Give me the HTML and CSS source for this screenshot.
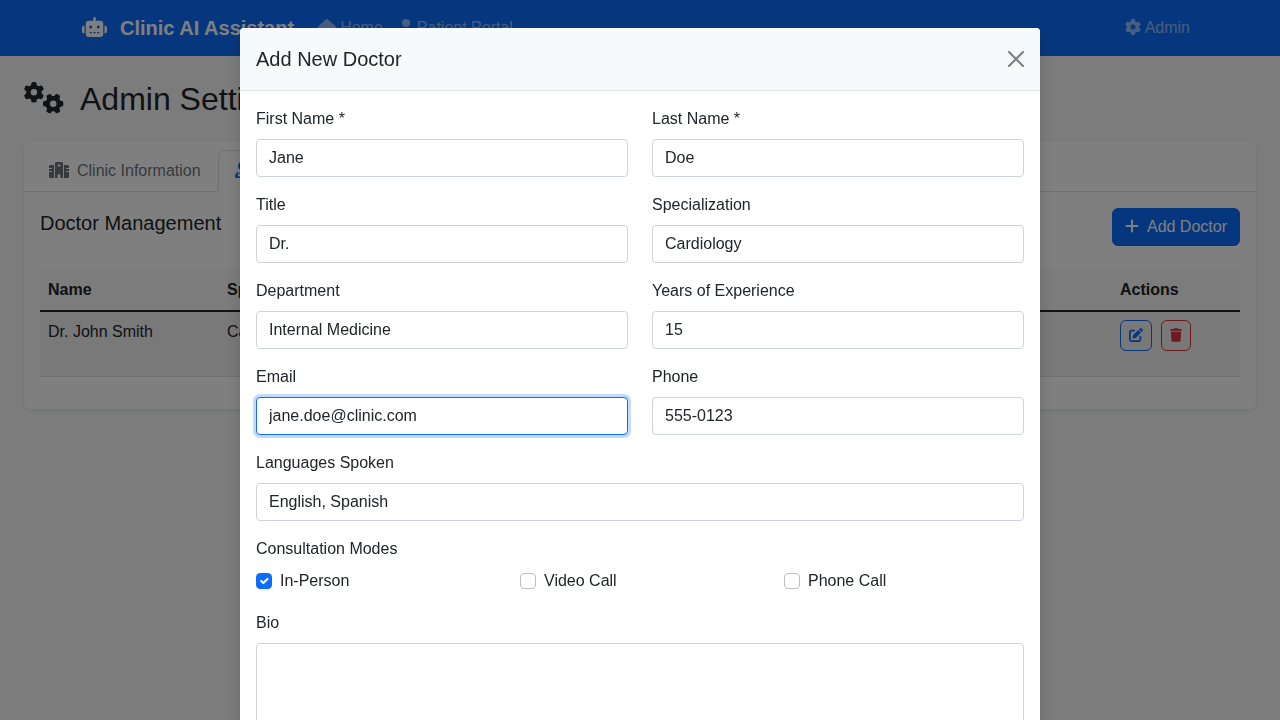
FILE: index.html
```html
<!DOCTYPE html>
<html lang="en">
<head>
<meta charset="utf-8">
<meta name="viewport" content="width=device-width, initial-scale=1">
<title>Admin Settings - Clinic AI Assistant</title>
<link rel="stylesheet" href="styles.css">
</head>
<body>
<svg class="sprite" aria-hidden="true">
  <symbol id="gear" viewBox="0 0 512 512"><path d="M495.9 166.6c3.2 8.7 .5 18.4-6.4 24.6l-43.3 39.4c1.1 8.3 1.7 16.8 1.7 25.4s-.6 17.1-1.7 25.4l43.3 39.4c6.9 6.2 9.6 15.9 6.4 24.6c-4.4 11.9-9.7 23.3-15.8 34.3l-4.7 8.1c-6.6 11-14 21.4-22.1 31.2c-5.9 7.2-15.7 9.6-24.5 6.8l-55.7-17.7c-13.4 10.3-28.2 18.9-44 25.4l-12.5 57.1c-2 9.1-9 16.3-18.2 17.8c-13.8 2.3-28 3.5-42.5 3.5s-28.7-1.2-42.5-3.5c-9.2-1.5-16.2-8.7-18.2-17.8l-12.5-57.1c-15.8-6.5-30.6-15.1-44-25.4L83.1 425.9c-8.8 2.8-18.6 .3-24.5-6.8c-8.1-9.8-15.5-20.2-22.1-31.2l-4.7-8.1c-6.1-11-11.4-22.4-15.8-34.3c-3.2-8.7-.5-18.4 6.4-24.6l43.3-39.4C64.6 273.1 64 264.6 64 256s.6-17.1 1.7-25.4L22.4 191.2c-6.9-6.2-9.6-15.9-6.4-24.6c4.4-11.9 9.7-23.3 15.8-34.3l4.7-8.1c6.6-11 14-21.4 22.1-31.2c5.9-7.2 15.7-9.6 24.5-6.8l55.7 17.7c13.4-10.3 28.2-18.9 44-25.4l12.5-57.1c2-9.1 9-16.3 18.2-17.8C227.3 1.2 241.5 0 256 0s28.7 1.2 42.5 3.5c9.2 1.5 16.2 8.7 18.2 17.8l12.5 57.1c15.8 6.5 30.6 15.1 44 25.4l55.7-17.7c8.8-2.8 18.6-.3 24.5 6.8c8.1 9.8 15.5 20.2 22.1 31.2l4.7 8.1c6.1 11 11.4 22.4 15.8 34.3zM256 336a80 80 0 1 0 0-160 80 80 0 1 0 0 160z"/></symbol>
</svg>

<nav class="navbar">
  <div class="navbar-inner">
    <a class="brand" href="#">
      <svg class="icon icon-brand" viewBox="0 0 640 512"><path d="M320 0c17.7 0 32 14.3 32 32V96H472c39.8 0 72 32.2 72 72V440c0 39.8-32.2 72-72 72H168c-39.8 0-72-32.2-72-72V168c0-39.8 32.2-72 72-72H288V32c0-17.7 14.3-32 32-32zM208 384c-8.8 0-16 7.2-16 16s7.2 16 16 16h32c8.8 0 16-7.2 16-16s-7.2-16-16-16H208zm96 0c-8.8 0-16 7.2-16 16s7.2 16 16 16h32c8.8 0 16-7.2 16-16s-7.2-16-16-16H304zm96 0c-8.8 0-16 7.2-16 16s7.2 16 16 16h32c8.8 0 16-7.2 16-16s-7.2-16-16-16H400zM264 256a40 40 0 1 0 -80 0 40 40 0 1 0 80 0zm152 40a40 40 0 1 0 0-80 40 40 0 1 0 0 80zM48 224H64V416H48c-26.5 0-48-21.5-48-48V272c0-26.5 21.5-48 48-48zm544 0c26.5 0 48 21.5 48 48v96c0 26.5-21.5 48-48 48H576V224h16z"/></svg>
      Clinic AI Assistant
    </a>
    <div class="nav-links">
      <a class="nav-link" href="#"><svg class="icon icon-home" viewBox="0 0 576 512"><path d="M575.8 255.5c0 18-15 32.1-32 32.1h-32l.7 160.2c0 35-28 64-64 64H128c-35 0-64-29-64-64V287.6H32c-18 0-32-14-32-32.1c0-9 3-17 10-24L266.4 8c7-7 15-8 22-8s15 2 21 7L564.8 231.5c8 7 12 15 11 24z"/></svg>Home</a>
      <a class="nav-link" href="#"><svg class="icon icon-user" viewBox="0 0 448 512"><path d="M224 256A128 128 0 1 0 224 0a128 128 0 1 0 0 256zm-45.700 48C79.800 304 0 383.800 0 482.300C0 498.700 13.300 512 29.700 512H418.300c16.400 0 29.700-13.300 29.700-29.700C448 383.800 368.200 304 269.700 304H178.300z"/></svg>Patient Portal</a>
    </div>
    <a class="nav-link" href="#"><svg class="icon"><use href="#gear"/></svg>Admin</a>
  </div>
</nav>

<main class="page">
  <h1 class="page-title">
    <svg class="icon icon-title" viewBox="0 0 640 512"><use href="#gear" x="-6" y="0" width="330" height="330"/><use href="#gear" x="303" y="182" width="330" height="330" transform="rotate(90 468 347)"/></svg>
    Admin Settings
  </h1>

  <section class="card">
    <div class="card-header">
      <div class="tabs" role="tablist">
        <button class="tab" type="button" role="tab"><svg class="icon icon-wide" viewBox="0 0 640 512"><path fill-rule="evenodd" d="M240 0H400c26 0 48 22 48 48V512H368V432a48 48 0 0 0-96 0v80H192V48c0-26 22-48 48-48zM304 64v32h-32v32h32v32h32v-32h32V96h-32V64zM48 96H160V512H48c-26 0-48-22-48-48V320H80c21 0 21-32 0-32H0V224H80c21 0 21-32 0-32H0V144c0-26 22-48 48-48zM480 96H592c26 0 48 22 48 48v48H560c-21 0-21 32 0 32h80v64H560c-21 0-21 32 0 32h80V464c0 26-22 48-48 48H480z"/></svg>Clinic Information</button>
        <button class="tab tab-active" type="button" role="tab" aria-selected="true"><svg class="icon icon-user" viewBox="0 0 448 512"><path fill-rule="evenodd" d="M224 256A128 128 0 1 0 224 0a128 128 0 1 0 0 256zM96 311C40 336 0 400 0 482c0 17 13 30 30 30H418c17 0 30-13 30-30c0-82-40-146-96-171v58a56 56 0 0 1 32 50v45h-48v-32h16v-13a24 24 0 0 0-48 0v13h16v32h-48v-45a56 56 0 0 1 32-50v-65h-16l-64 120-64-120h-16v82a40 40 0 1 1-32 0z"/></svg>Doctors</button>
      </div>
    </div>
    <div class="card-body">
      <div class="toolbar">
        <h2 class="section-title">Doctor Management</h2>
        <button class="btn btn-primary" type="button"><svg class="icon icon-user" viewBox="0 0 448 512"><path d="M256 80c0-17.700-14.300-32-32-32s-32 14.300-32 32V224H48c-17.700 0-32 14.300-32 32s14.300 32 32 32H192V432c0 17.700 14.300 32 32 32s32-14.300 32-32V288H400c17.700 0 32-14.300 32-32s-14.300-32-32-32H256V80z"/></svg>Add Doctor</button>
      </div>
      <table class="table">
        <thead>
          <tr><th class="col-name">Name</th><th>Specialization</th><th class="col-actions">Actions</th></tr>
        </thead>
        <tbody>
          <tr>
            <td>Dr. John Smith</td>
            <td>Cardiology</td>
            <td>
              <div class="actions">
                <button class="btn-sm btn-edit" type="button" aria-label="Edit"><svg class="icon-sm" viewBox="0 0 512 512"><path d="M471.6 21.7c-21.9-21.9-57.3-21.9-79.2 0L362.3 51.700l97.900 97.900 30.100-30.100c21.900-21.900 21.900-57.300 0-79.200L471.600 21.700zm-299.200 220c-6.100 6.100-10.800 13.600-13.500 21.900l-29.600 88.800c-2.900 8.600-.6 18.100 5.800 24.600s15.900 8.700 24.600 5.800l88.800-29.600c8.200-2.700 15.700-7.400 21.900-13.500L437.700 172.300 339.700 74.300 172.400 241.700zM96 64C43 64 0 107 0 160V416c0 53 43 96 96 96H352c53 0 96-43 96-96V320c0-17.700-14.300-32-32-32s-32 14.300-32 32v96c0 17.700-14.300 32-32 32H96c-17.700 0-32-14.300-32-32V160c0-17.700 14.300-32 32-32h96c17.700 0 32-14.300 32-32s-14.300-32-32-32H96z"/></svg></button>
                <button class="btn-sm btn-delete" type="button" aria-label="Delete"><svg class="icon-sm icon-trash" viewBox="0 0 448 512"><path d="M135.200 17.700L128 32H32C14.300 32 0 46.300 0 64S14.300 96 32 96H416c17.700 0 32-14.300 32-32s-14.300-32-32-32H320l-7.200-14.300C307.400 6.800 296.300 0 284.200 0H163.800c-12.100 0-23.200 6.800-28.600 17.700zM416 128H32L53.200 467c1.600 25.300 22.600 45 47.900 45H346.900c25.300 0 46.300-19.700 47.900-45L416 128z"/></svg></button>
              </div>
            </td>
          </tr>
        </tbody>
      </table>
    </div>
  </section>
</main>

<div class="overlay">
  <form class="modal" role="dialog" aria-modal="true" aria-labelledby="modal-title">
    <header class="modal-header">
      <h2 class="section-title" id="modal-title">Add New Doctor</h2>
      <button class="close" type="button" aria-label="Close"><svg class="icon-close" viewBox="0 0 16 16"><path d="M1 1l14 14M15 1L1 15" stroke="currentColor" stroke-width="2" stroke-linecap="round"/></svg></button>
    </header>
    <div class="modal-body">
      <div class="form-grid">
        <div class="field"><label for="first">First Name *</label><input class="control" id="first" type="text" value="Jane"></div>
        <div class="field"><label for="last">Last Name *</label><input class="control" id="last" type="text" value="Doe"></div>
        <div class="field"><label for="title">Title</label><input class="control" id="title" type="text" value="Dr."></div>
        <div class="field"><label for="spec">Specialization</label><input class="control" id="spec" type="text" value="Cardiology"></div>
        <div class="field"><label for="dept">Department</label><input class="control" id="dept" type="text" value="Internal Medicine"></div>
        <div class="field"><label for="years">Years of Experience</label><input class="control" id="years" type="text" inputmode="numeric" value="15"></div>
        <div class="field"><label for="email">Email</label><input class="control control-current" id="email" type="email" value="jane.doe@clinic.com"></div>
        <div class="field"><label for="phone">Phone</label><input class="control" id="phone" type="tel" value="555-0123"></div>
      </div>
      <div class="field"><label for="langs">Languages Spoken</label><input class="control" id="langs" type="text" value="English, Spanish"></div>
      <fieldset class="modes">
        <legend>Consultation Modes</legend>
        <div class="mode-grid">
          <label class="check"><input type="checkbox" checked>In-Person</label>
          <label class="check"><input type="checkbox">Video Call</label>
          <label class="check"><input type="checkbox">Phone Call</label>
        </div>
      </fieldset>
      <div class="field"><label for="bio">Bio</label><textarea class="control" id="bio" rows="3"></textarea></div>
    </div>
  </form>
</div>
</body>
</html>
```
FILE: styles.css
```css
*, *::before, *::after { box-sizing: border-box; }

body {
  margin: 0;
  overflow: hidden;
  background: #f8f9fa;
  color: #212529;
  font-family: "Liberation Sans", Arial, sans-serif;
  font-size: 16px;
  line-height: 24px;
}

h1, h2 { margin: 0; font-weight: 400; }
button, input, textarea { font: inherit; color: inherit; }
button { cursor: pointer; }
a { color: inherit; text-decoration: none; }

.sprite { display: none; }
.icon, .icon-sm, .icon-close { flex: none; fill: currentColor; }
.icon { width: 16px; height: 16px; margin-bottom: 2px; }
.icon-user { width: 14px; }
.icon-home { width: 18px; }
.icon-wide { width: 20px; }
.icon-brand { width: 25px; height: 20px; }
.icon-title { width: 40px; height: 32px; }
.icon-sm { width: 14px; height: 14px; }
.icon-trash { width: 12px; }
.icon-close { width: 16px; height: 16px; }

.navbar { background: #0d6efd; color: #fff; }
.navbar-inner {
  display: flex;
  align-items: center;
  max-width: 1140px;
  min-height: 56px;
  margin: 0 auto;
  padding: 8px 12px;
}
.brand {
  display: flex;
  align-items: center;
  gap: 13px;
  margin-right: 16px;
  font-size: 20px;
  font-weight: 700;
}
.nav-links { display: flex; margin-right: auto; }
.nav-link {
  display: flex;
  align-items: center;
  gap: 4px;
  padding: 8px;
  color: rgba(255, 255, 255, 0.55);
}

.page { padding: 24px; }
.page-title {
  display: flex;
  align-items: center;
  gap: 16px;
  margin-bottom: 24px;
  font-size: 32px;
  line-height: 38px;
}

.card {
  border-radius: 6px;
  background: #fff;
  box-shadow: 0 2px 4px rgba(0, 0, 0, 0.08);
}
.card-header { padding: 8px 8px 0; border-bottom: 1px solid #dee2e6; }
.tabs { display: flex; margin-bottom: -1px; }
.tab {
  display: flex;
  align-items: center;
  gap: 8px;
  padding: 8px 16px;
  border: 1px solid transparent;
  border-radius: 6px 6px 0 0;
  background: none;
  color: #6c757d;
}
.tab-active { border-color: #dee2e6 #dee2e6 #fff; background: #fff; color: #0d6efd; }

.card-body { padding: 16px 16px 32px; }
.toolbar {
  display: flex;
  align-items: flex-start;
  justify-content: space-between;
  margin-bottom: 24px;
}
.section-title { font-size: 20px; line-height: 30px; }
.btn {
  display: flex;
  align-items: center;
  gap: 8px;
  padding: 6px 12px;
  border: 1px solid #0d6efd;
  border-radius: 6px;
}
.btn-primary { background: #0d6efd; color: #fff; }

.table { width: 100%; border-collapse: separate; border-spacing: 0; table-layout: fixed; }
.table th, .table td { padding: 8px; text-align: left; vertical-align: top; }
.table th { border-bottom: 2px solid #212529; background: #f8f9fa; }
.table td { height: 65px; border-bottom: 1px solid #dee2e6; background: #f2f2f2; }
.col-name { width: 179px; }
.col-actions { width: 128px; }
.actions { display: flex; gap: 9px; }
.btn-sm {
  display: flex;
  align-items: center;
  padding: 7px 8px 8px;
  border: 1px solid currentColor;
  border-radius: 6px;
  background: none;
}
.btn-edit { color: #0d6efd; }
.btn-delete { color: #dc3545; }

.overlay {
  position: fixed;
  inset: 0;
  overflow-y: auto;
  scrollbar-width: none;
  background: rgba(0, 0, 0, 0.5);
}
.modal {
  width: min(800px, 100% - 16px);
  margin: 28px auto;
  border-radius: 4px;
  background: #fff;
  box-shadow: 0 8px 16px rgba(0, 0, 0, 0.15);
}
.modal-header {
  display: flex;
  align-items: center;
  justify-content: space-between;
  padding: 16px;
  border-bottom: 1px solid #dee2e6;
  border-radius: 4px 4px 0 0;
  background: #f8f9fa;
}
.close {
  display: flex;
  padding: 0;
  border: 0;
  background: none;
  color: #7c7d7d;
}
.modal-body { padding: 16px; }
.form-grid { display: grid; grid-template-columns: 1fr 1fr; column-gap: 24px; }
.field { margin-bottom: 16px; }
.field label { display: block; margin-bottom: 8px; }
.control {
  display: block;
  width: 100%;
  padding: 6px 12px;
  border: 1px solid #ced4da;
  border-radius: 4px;
  outline: 0;
  background: #fff;
}
.control-current, .control:focus {
  border-color: #0d6efd;
  box-shadow: 0 0 0 3px rgba(13, 110, 253, 0.25);
}
textarea.control { min-height: 86px; resize: vertical; }

.modes { margin: 0 0 16px; padding: 0; border: 0; }
.modes legend { margin-bottom: 8px; padding: 0; }
.mode-grid { display: grid; grid-template-columns: repeat(3, 1fr); column-gap: 24px; padding-bottom: 2px; }
.check { display: flex; align-items: center; gap: 8px; }
.check input {
  appearance: none;
  width: 16px;
  height: 16px;
  margin: 0;
  border: 1px solid #bfbfbf;
  border-radius: 4px;
  background: #fff center / 100% no-repeat;
}
.check input:checked {
  border-color: #0d6efd;
  background-color: #0d6efd;
  background-image: url("data:image/svg+xml,%3csvg xmlns='http://www.w3.org/2000/svg' viewBox='0 0 20 20'%3e%3cpath fill='none' stroke='%23fff' stroke-linecap='round' stroke-linejoin='round' stroke-width='3' d='m6 10 3 3 6-6'/%3e%3c/svg%3e");
}
```
